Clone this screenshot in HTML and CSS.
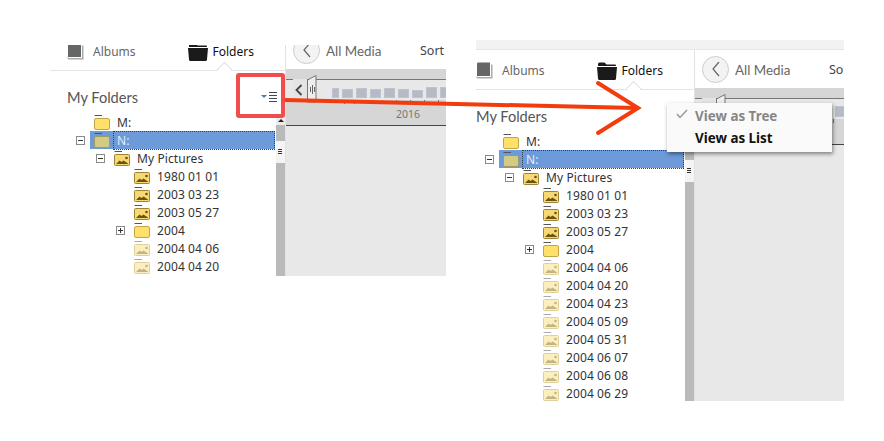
FILE: index.html
```html
<!DOCTYPE html>
<html lang="en">
<head>
    <meta charset="UTF-8">
    <title>My Folders - View as Tree</title>
    <link rel="stylesheet" href="styles.css">
</head>
<body>
    <svg class="defs" width="0" height="0">
        <symbol id="fld" viewBox="0 0 16 15">
            <path d="M0.5 0.5H8" stroke="currentColor" fill="none"/>
            <rect class="fld-body" x="0.5" y="3.5" width="15" height="11" rx="1.5"/>
        </symbol>
        <symbol id="fld-pic" viewBox="0 0 16 15">
            <path d="M0.5 0.5H8" stroke="currentColor" fill="none"/>
            <rect class="fld-body" x="0.5" y="3.5" width="15" height="11" rx="1"/>
            <path class="fld-hill" d="M2 13L5.5 9.5 7.500 11 9.500 9.500 14 12.500V13Z"/>
            <circle class="fld-hill" cx="12.500" cy="7" r="1.300"/>
        </symbol>
        <symbol id="album" viewBox="0 0 17 17">
            <path d="M1 1.500Q1 0.500 2 0.500H14V14H1Z" fill="#666"/>
            <path d="M15 2.500H16.500V16.500H2Q0.500 16.500 0.500 15V13.500Q1 15 2.500 15H15Z" fill="#aaa"/>
        </symbol>
        <symbol id="folder-black" viewBox="0 0 20 18">
            <path d="M1 4V2Q1 0.500 2.500 0.500H7.500L9.500 2.500H18Q19 2.500 19 3.500V4Z" fill="#1a1a1a"/>
            <path d="M0 5H20L19 16.500Q19 18 17.500 18H2.500Q1 18 1 16.500Z" fill="#1a1a1a"/>
        </symbol>
        <symbol id="list-view" viewBox="0 0 16 10">
            <path d="M0 3H6L3 6Z" fill="#4f7ba6"/>
            <path d="M8 0.500H16M8 3.500H16M8 6.500H16M8 9.500H16" stroke="#3c4a58" fill="none"/>
        </symbol>
    </svg>

    <div class="stage">
        <!-- small window, before -->
        <section class="panel panel-before">
            <aside class="sidebar">
                <div class="tabs">
                    <span class="tab"><svg class="tab-icon"><use href="#album"/></svg>Albums</span>
                    <span class="tab tab-active"><svg class="tab-icon tab-icon-folder"><use href="#folder-black"/></svg>Folders</span>
                </div>
                <div class="heading">
                    <h2>My Folders</h2>
                    <svg class="view-btn"><use href="#list-view"/></svg>
                </div>
                <div class="tree-wrap">
                    <ul class="tree">
                        <li class="row d0"><span class="exp none"></span><span class="label"><svg class="fld"><use href="#fld"/></svg><span class="name">M:</span></span></li>
                        <li class="row d0 selected"><span class="exp minus"></span><span class="label"><svg class="fld"><use href="#fld"/></svg><span class="name">N:</span></span></li>
                        <li class="row d1"><span class="exp minus"></span><span class="label"><svg class="fld pic"><use href="#fld-pic"/></svg><span class="name">My Pictures</span></span></li>
                        <li class="row d2"><span class="exp none"></span><span class="label"><svg class="fld pic"><use href="#fld-pic"/></svg><span class="name">1980 01 01</span></span></li>
                        <li class="row d2"><span class="exp none"></span><span class="label"><svg class="fld pic"><use href="#fld-pic"/></svg><span class="name">2003 03 23</span></span></li>
                        <li class="row d2"><span class="exp none"></span><span class="label"><svg class="fld pic"><use href="#fld-pic"/></svg><span class="name">2003 05 27</span></span></li>
                        <li class="row d2"><span class="exp plus"></span><span class="label"><svg class="fld"><use href="#fld"/></svg><span class="name">2004</span></span></li>
                        <li class="row d2 faded"><span class="exp none"></span><span class="label"><svg class="fld"><use href="#fld-pic"/></svg><span class="name">2004 04 06</span></span></li>
                        <li class="row d2 faded"><span class="exp none"></span><span class="label"><svg class="fld"><use href="#fld-pic"/></svg><span class="name">2004 04 20</span></span></li>
                    </ul>
                    <div class="scrollbar"><div class="sb-up"></div><div class="sb-thumb"></div></div>
                </div>
            </aside>
            <main class="content">
                <div class="content-head">
                    <span class="back"><svg width="10" height="16" viewBox="0 0 10 16"><path d="M8 1L2 8l6 7" fill="none" stroke="#666" stroke-width="1.200"/></svg></span>
                    <span class="crumb">All Media</span>
                    <span class="sort">Sort</span>
                </div>
                <div class="timeline">
                    <div class="tl-track">
                        <span class="tl-prev"><svg width="8" height="12" viewBox="0 0 8 12"><path d="M6.500 1L1.500 6l5 5" fill="none" stroke="#444" stroke-width="1.800"/></svg></span>
                        <svg class="tl-handle" width="10" height="28" viewBox="0 0 10 28"><path d="M0.500 5L9 0.500V27H0.500Z" fill="#eee" stroke="#777"/><path d="M3.500 12v5M5.500 10v9M7.500 12v5" stroke="#666"/></svg>
                        <div class="bars">
                            <i class="bar bar-first" style="height:10px"></i>
                            <i class="bar" style="height:9px"></i>
                            <i class="bar" style="height:10px"></i>
                            <i class="bar" style="height:9px"></i>
                            <i class="bar" style="height:10px"></i>
                            <i class="bar" style="height:9px"></i>
                            <i class="bar" style="height:8px"></i>
                            <i class="bar" style="height:11px"></i>
                            <i class="bar" style="height:11px"></i>
                        </div>
                    </div>
                    <div class="tl-year">2016</div>
                </div>
            </main>
        </section>

        <!-- larger window, after clicking the view button -->
        <section class="panel panel-after">
            <div class="strip"></div>
            <div class="panel-body">
                <aside class="sidebar">
                    <div class="tabs">
                        <span class="tab"><svg class="tab-icon"><use href="#album"/></svg>Albums</span>
                        <span class="tab tab-active"><svg class="tab-icon tab-icon-folder"><use href="#folder-black"/></svg>Folders</span>
                    </div>
                    <div class="heading">
                        <h2>My Folders</h2>
                        <svg class="view-btn"><use href="#list-view"/></svg>
                    </div>
                    <div class="tree-wrap">
                        <ul class="tree">
                            <li class="row d0"><span class="exp none"></span><span class="label"><svg class="fld"><use href="#fld"/></svg><span class="name">M:</span></span></li>
                            <li class="row d0 selected"><span class="exp minus"></span><span class="label"><svg class="fld"><use href="#fld"/></svg><span class="name">N:</span></span></li>
                            <li class="row d1"><span class="exp minus"></span><span class="label"><svg class="fld pic"><use href="#fld-pic"/></svg><span class="name">My Pictures</span></span></li>
                            <li class="row d2"><span class="exp none"></span><span class="label"><svg class="fld pic"><use href="#fld-pic"/></svg><span class="name">1980 01 01</span></span></li>
                            <li class="row d2"><span class="exp none"></span><span class="label"><svg class="fld pic"><use href="#fld-pic"/></svg><span class="name">2003 03 23</span></span></li>
                            <li class="row d2"><span class="exp none"></span><span class="label"><svg class="fld pic"><use href="#fld-pic"/></svg><span class="name">2003 05 27</span></span></li>
                            <li class="row d2"><span class="exp plus"></span><span class="label"><svg class="fld"><use href="#fld"/></svg><span class="name">2004</span></span></li>
                            <li class="row d2 faded"><span class="exp none"></span><span class="label"><svg class="fld"><use href="#fld-pic"/></svg><span class="name">2004 04 06</span></span></li>
                            <li class="row d2 faded"><span class="exp none"></span><span class="label"><svg class="fld"><use href="#fld-pic"/></svg><span class="name">2004 04 20</span></span></li>
                            <li class="row d2 faded"><span class="exp none"></span><span class="label"><svg class="fld"><use href="#fld-pic"/></svg><span class="name">2004 04 23</span></span></li>
                            <li class="row d2 faded"><span class="exp none"></span><span class="label"><svg class="fld"><use href="#fld-pic"/></svg><span class="name">2004 05 09</span></span></li>
                            <li class="row d2 faded"><span class="exp none"></span><span class="label"><svg class="fld"><use href="#fld-pic"/></svg><span class="name">2004 05 31</span></span></li>
                            <li class="row d2 faded"><span class="exp none"></span><span class="label"><svg class="fld"><use href="#fld-pic"/></svg><span class="name">2004 06 07</span></span></li>
                            <li class="row d2 faded"><span class="exp none"></span><span class="label"><svg class="fld"><use href="#fld-pic"/></svg><span class="name">2004 06 08</span></span></li>
                            <li class="row d2 faded"><span class="exp none"></span><span class="label"><svg class="fld"><use href="#fld-pic"/></svg><span class="name">2004 06 29</span></span></li>
                        </ul>
                        <div class="scrollbar"><div class="sb-up"></div><div class="sb-thumb"></div></div>
                    </div>
                </aside>
                <main class="content">
                    <div class="content-head">
                        <span class="back"><svg width="10" height="16" viewBox="0 0 10 16"><path d="M8 1L2 8l6 7" fill="none" stroke="#666" stroke-width="1.200"/></svg></span>
                        <span class="crumb">All Media</span>
                        <span class="sort">Sort</span>
                    </div>
                    <div class="timeline">
                        <div class="tl-track">
                            <span class="tl-prev"><svg width="8" height="12" viewBox="0 0 8 12"><path d="M6.500 1L1.500 6l5 5" fill="none" stroke="#444" stroke-width="1.800"/></svg></span>
                            <svg class="tl-handle" width="10" height="28" viewBox="0 0 10 28"><path d="M0.500 5L9 0.500V27H0.500Z" fill="#eee" stroke="#777"/><path d="M3.500 12v5M5.500 10v9M7.500 12v5" stroke="#666"/></svg>
                            <div class="bars">
                                <i class="bar bar-first" style="height:10px"></i>
                                <i class="bar" style="height:9px"></i>
                                <i class="bar" style="height:10px"></i>
                                <i class="bar" style="height:9px"></i>
                                <i class="bar" style="height:10px"></i>
                                <i class="bar" style="height:9px"></i>
                                <i class="bar" style="height:8px"></i>
                                <i class="bar" style="height:11px"></i>
                                <i class="bar" style="height:11px"></i>
                            </div>
                        </div>
                        <div class="tl-year">2016</div>
                    </div>
                </main>
            </div>
            <div class="menu">
                <div class="menu-item checked">
                    <svg class="check" width="12" height="10" viewBox="0 0 12 10"><path d="M1 5l3 3.500L11 1" fill="none" stroke="#999" stroke-width="1.500"/></svg>
                    View as Tree
                </div>
                <div class="menu-item">View as List</div>
            </div>
        </section>

        <!-- annotation drawn on top of the two windows -->
        <svg class="annotation" width="884" height="441" viewBox="0 0 884 441">
            <rect x="238" y="75" width="45" height="41" rx="1" fill="none" stroke="#f14d4d" stroke-width="4"/>
            <path d="M285 100L636 108" fill="none" stroke="#f23c0e" stroke-width="4"/>
            <path d="M598 83L638 108 598 133" fill="none" stroke="#f23c0e" stroke-width="4" stroke-linecap="round" stroke-linejoin="miter"/>
        </svg>
    </div>
</body>
</html>
```

FILE: styles.css
```css
* {
    margin: 0;
    padding: 0;
    box-sizing: border-box;
}

body {
    background: #fff;
    color: #333;
    font-family: 'Noto Sans', 'DejaVu Sans', sans-serif;
    font-size: 12px;
    overflow: hidden;
}

.defs {
    position: absolute;
}

.stage {
    position: relative;
    width: 884px;
    height: 441px;
    display: flex;
    align-items: flex-start;
    gap: 30px;
    padding: 40px 0 0 50px;
}

.annotation {
    position: absolute;
    top: 0;
    left: 0;
    pointer-events: none;
}

/* windows */
.panel {
    position: relative;
    background: #fff;
}

.panel-before {
    display: flex;
    width: 396px;
    height: 231px;
    margin-top: 5px;
    overflow: hidden;
    --inset: 17px;
    --sidebar: 236px;
    --head-shift: -14px;
}

.panel-after {
    display: flex;
    flex-direction: column;
    width: 368px;
    height: 361px;
    --inset: 0px;
    --sidebar: 219px;
    --head-shift: 0px;
}

.panel-body {
    display: flex;
    flex: 1;
    min-height: 0;
}

.strip {
    height: 10px;
    background: #f2f2f2;
    border-bottom: 1px solid #e6e6e6;
}

/* left column */
.sidebar {
    display: flex;
    flex-direction: column;
    flex: none;
    width: var(--sidebar);
    border-right: 1px solid #e2e2e2;
}

.tabs {
    position: relative;
    display: flex;
    align-items: center;
    height: 40px;
    margin-top: var(--head-shift);
    padding-left: var(--inset);
    padding-top: 2px;
    border-bottom: 1px solid #e4e4e4;
    font-size: 12px;
    line-height: 12px;
}

.tabs::after {
    content: "";
    position: absolute;
    bottom: -5px;
    left: calc(var(--inset) + 152px);
    width: 10px;
    height: 10px;
    background: #fff;
    border-top: 1px solid #e0e0e0;
    border-left: 1px solid #e0e0e0;
    transform: rotate(45deg);
}

.tab {
    display: flex;
    align-items: center;
    gap: 9px;
    color: #666;
}

.tab-active {
    margin-left: 52px;
    gap: 5px;
    color: #111;
}

.tab-icon {
    width: 17px;
    height: 17px;
}

.tab-icon-folder {
    width: 20px;
    height: 18px;
}

.heading {
    display: flex;
    align-items: center;
    flex: none;
    height: 42px;
    padding: 10px 8px 0 var(--inset);
}

.heading h2 {
    font-family: 'Lato', 'Noto Sans', sans-serif;
    font-size: 14.600px;
    font-weight: 400;
    color: #555;
}

.view-btn {
    width: 16px;
    height: 10px;
    margin-left: auto;
}

.tree-wrap {
    display: flex;
    flex: 1;
    min-height: 0;
    padding-left: var(--inset);
}

.tree {
    flex: 1;
    list-style: none;
    padding: 0 1px 0 9px;
}

.row {
    display: flex;
    align-items: center;
    height: 18px;
}

.row.d1 {
    padding-left: 20px;
}

.row.d2 {
    padding-left: 40px;
}

.exp {
    position: relative;
    flex: none;
    width: 9px;
    height: 9px;
    margin-right: 5px;
    border: 1px solid #8a8a8a;
}

.exp.none {
    visibility: hidden;
}

.exp.minus::before,
.exp.plus::before {
    content: "";
    position: absolute;
    top: 3px;
    left: 1px;
    width: 5px;
    height: 1px;
    background: #333;
}

.exp.plus::after {
    content: "";
    position: absolute;
    top: 1px;
    left: 3px;
    width: 1px;
    height: 5px;
    background: #333;
}

.label {
    display: flex;
    flex: 1;
    align-items: center;
    height: 18px;
    padding-left: 4px;
}

/* colours go through variables so they reach inside <use> */
.fld {
    --body: #fee06a;
    --edge: #c2a548;
    --hill: #6e5310;
    flex: none;
    width: 16px;
    height: 15px;
    margin-right: 3px;
    color: #555;
}

.fld.pic {
    --body: #f7d873;
    --edge: #9c8432;
}

.fld-body {
    fill: var(--body);
    stroke: var(--edge);
}

.fld-hill {
    fill: var(--hill);
}

.name {
    flex: 1;
    padding-left: 4px;
    line-height: 17px;
    color: #333;
    letter-spacing: 0.100px;
}

.row.selected .label {
    background: #6d9ad8;
}

.row.selected .name {
    color: #e4edfa;
    border: 1px dotted #2f3f55;
    padding-left: 3px;
}

.row.selected .fld {
    --body: #d3cb84;
    --edge: #a09a66;
}

.row.faded .fld {
    --body: #fbefc0;
    --edge: #dfd09a;
    --hill: #c4b383;
    color: #aaa;
}

.scrollbar {
    flex: none;
    width: 9px;
    margin-top: 5px;
    background: #bababa;
}

.sb-up {
    height: 7px;
    background: #ececec;
    position: relative;
}

.sb-up::before {
    content: "";
    position: absolute;
    top: 1px;
    left: 2px;
    border-left: 3px solid transparent;
    border-right: 3px solid transparent;
    border-bottom: 3px solid #222;
}

.sb-thumb {
    position: relative;
    height: 22px;
    margin-top: 16px;
    background: #f4f4f4;
}

.sb-thumb::after {
    content: "";
    position: absolute;
    top: 8px;
    left: 2px;
    width: 4px;
    height: 5px;
    background: repeating-linear-gradient(#333 0 1px, transparent 1px 2px);
}

/* right column */
.content {
    position: relative;
    display: flex;
    flex: 1;
    flex-direction: column;
    min-width: 0;
    overflow: hidden;
    background: #e8e8e8;
}

.content-head {
    display: flex;
    flex: none;
    align-items: center;
    height: 38px;
    margin-top: var(--head-shift);
    padding-left: 7px;
    background: #fff;
    white-space: nowrap;
}

.back {
    display: flex;
    flex: none;
    align-items: center;
    justify-content: center;
    width: 27px;
    height: 27px;
    border: 1px solid #ccc;
    border-radius: 50%;
    background: #f3f3f3;
}

.crumb {
    margin: 2px 0 0 6px;
    font-family: 'Lato', 'Noto Sans', sans-serif;
    font-size: 13.400px;
    line-height: 12px;
    color: #666;
}

.sort {
    position: absolute;
    left: 134px;
    margin-top: 2px;
    font-size: 12.500px;
    line-height: 12px;
    color: #444;
}

.timeline {
    flex: none;
    height: 57px;
    padding-top: 10px;
    background: #d6d6d6;
    border-bottom: 1px solid #444;
}

.tl-track {
    display: flex;
    height: 21px;
    padding-left: 7px;
    background: linear-gradient(#777 1px, #e8e8e8 1px);
    white-space: nowrap;
}

.tl-prev {
    display: flex;
    flex: none;
    align-items: center;
    width: 14px;
    padding-left: 2px;
    background: #e4e4e4;
}

.tl-handle {
    flex: none;
    margin-top: -4px;
}

.bars {
    display: flex;
    align-items: flex-end;
    gap: 3px;
    margin-left: 15px;
    padding-bottom: 2px;
}

.bar {
    position: relative;
    flex: none;
    width: 11px;
    background: #b4bbc7;
    border: 1px solid #bec3cc;
}

.bar::after {
    content: "";
    position: absolute;
    bottom: -7px;
    left: 11px;
    width: 1px;
    height: 4px;
    background: #777;
}

.bar-first {
    width: 7px;
}

.tl-year {
    height: 14px;
    margin: 7px 0 0 110px;
    font-size: 10.500px;
    line-height: 14px;
    color: #777;
}

/* dropdown */
.menu {
    position: absolute;
    top: 63px;
    left: 191px;
    width: 165px;
    height: 49px;
    padding-top: 2px;
    background: #fafafa;
    box-shadow: 1px 2px 4px rgba(0, 0, 0, 0.45);
}

.menu-item {
    position: relative;
    height: 22px;
    padding-left: 28px;
    font-size: 13.400px;
    font-weight: 700;
    line-height: 22px;
    color: #111;
}

.menu-item.checked {
    color: #868686;
}

.check {
    position: absolute;
    top: 4px;
    left: 9px;
}
```
